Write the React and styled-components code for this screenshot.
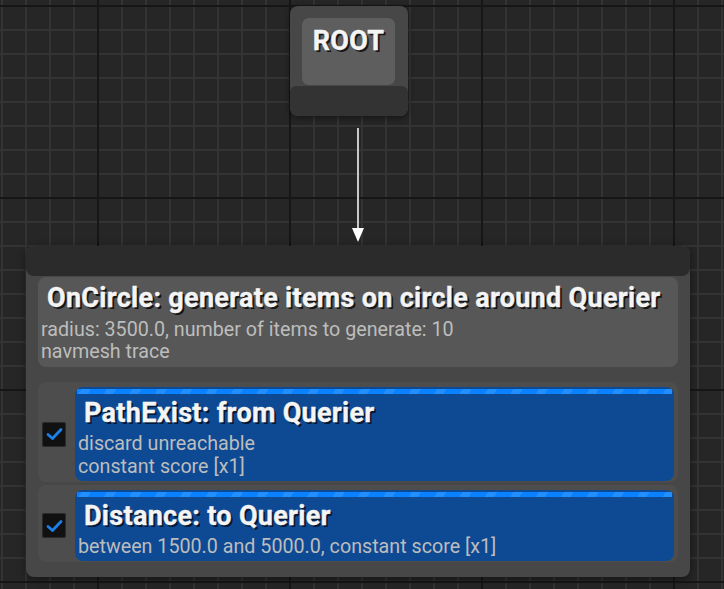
import React from 'react'
import styled, { createGlobalStyle } from 'styled-components'

const GlobalStyle = createGlobalStyle`
  html, body {
    margin: 0;
    padding: 0;
    background: #262626;
    font-family: Roboto, "Liberation Sans", sans-serif;
  }
`

const Canvas = styled.div`
  position: relative;
  width: 724px;
  height: 589px;
  overflow: hidden;
  background-color: #262626;
  background-image:
    linear-gradient(to right, #161616 2px, transparent 2px),
    linear-gradient(to bottom, #161616 2px, transparent 2px),
    linear-gradient(to right, #333333 2px, transparent 2px),
    linear-gradient(to bottom, #333333 2px, transparent 2px);
  background-size: 192px 192px, 192px 192px, 24px 24px, 24px 24px;
  background-position: 97px 0, 0 5px, 1px 0, 0 5px;
`

const RootNode = styled.div`
  position: absolute;
  left: 290px;
  top: 6px;
  width: 118px;
  height: 110px;
  display: flex;
  flex-direction: column;
  background: #474747;
  border-radius: 8px;
  box-shadow: 0 2px 6px rgba(0, 0, 0, 0.45);
  overflow: hidden;
`

const RootBody = styled.div`
  flex: 1;
  padding: 12px 13px 1px 12px;
  display: flex;
`

const RootPlate = styled.div`
  flex: 1;
  background: #5e5e5e;
  border-radius: 7px;
  display: flex;
  justify-content: center;
  padding-top: 8px;
`

const Heading = styled.div`
  font-weight: 700;
  color: #f4f4f4;
  font-size: 27px;
  letter-spacing: 0.3px;
  line-height: 30px;
  white-space: nowrap;
  -webkit-text-stroke: 0.35px #f4f4f4;
  text-shadow: 2px 2px 0 ${p => p.$shadow || 'rgba(0, 0, 0, 0.75)'};
`

const RootFooter = styled.div`
  height: 30px;
  background: #333333;
  border-radius: 6px 6px 8px 8px;
`

const Arrow = styled.svg`
  position: absolute;
  left: 350px;
  top: 126px;
`

const QueryNode = styled.div`
  position: absolute;
  left: 26px;
  top: 246px;
  width: 664px;
  height: 331px;
  background: #474747;
  border-radius: 8px;
  box-shadow: 0 2px 8px rgba(0, 0, 0, 0.45);
  display: flex;
  flex-direction: column;
`

const NodeHeader = styled.div`
  height: 30px;
  background: #2b2b2b;
  border-radius: 8px;
`

const NodeBody = styled.div`
  display: flex;
  flex-direction: column;
  padding: 1px 12px 15px 12px;
  gap: 15px;
`

const GeneratorCard = styled.div`
  height: 90px;
  box-sizing: border-box;
  background: #575757;
  border-radius: 8px;
  padding: 6px 8px 0 3px;
`

const Detail = styled.div`
  color: #bdbdbd;
  font-size: 19.7px;
  line-height: 22.5px;
  white-space: nowrap;
`

const TestList = styled.div`
  display: flex;
  flex-direction: column;
  gap: 3px;
`

const TestRow = styled.div`
  display: flex;
  align-items: center;
  gap: 9px;
  background: #4d4d4d;
  border-radius: 8px;
  padding: 5px 4px 1px 4px;
  height: ${p => p.$height}px;
  box-sizing: border-box;
`

const Checkbox = styled.div`
  width: 24px;
  height: 25px;
  flex: none;
  background: #111111;
  border-radius: 3px;
  box-shadow: inset 0 0 0 1px #2a2a2a;
  display: flex;
  align-items: center;
  justify-content: center;
`

const TestCard = styled.div`
  flex: 1;
  align-self: stretch;
  background: #0e4a94;
  border-radius: 8px;
  overflow: hidden;
  padding: 0 0 0 3px;
  display: flex;
  flex-direction: column;
`

const Stripe = styled.div`
  height: 5.5px;
  margin: 1.5px 2px 0 -1px;
  background-color: #0a82ff;
  background-image: repeating-linear-gradient(
    -60deg,
    rgba(255, 255, 255, 0.1) 0 8px,
    transparent 8px 22px
  );
`

const TestTitle = styled(Heading)`
  padding-left: 6px;
  margin: 3.5px 0 5.5px;
`

const GenTitle = styled(Heading)`
  padding-left: 6px;
  margin-bottom: 5.5px;
`

const Check = () => (
  <svg width="17" height="14" viewBox="0 0 17 14">
    <path d="M2 7.5 L6.5 11.5 L15 2.5" fill="none" stroke="#1b80ea" strokeWidth="2.8" strokeLinecap="round" strokeLinejoin="round" />
  </svg>
)

const tests = [
  {
    title: 'PathExist: from Querier',
    lines: ['discard unreachable', 'constant score [x1]'],
    height: 100,
  },
  {
    title: 'Distance: to Querier',
    lines: ['between 1500.0 and 5000.0, constant score [x1]'],
    height: 77,
  },
]

export default function App() {
  return (
    <>
      <GlobalStyle />
      <Canvas>
        <RootNode>
          <RootBody>
            <RootPlate>
              <Heading>ROOT</Heading>
            </RootPlate>
          </RootBody>
          <RootFooter />
        </RootNode>

        <Arrow width="16" height="118" viewBox="0 0 16 118">
          <line x1="8" y1="2" x2="8" y2="104" stroke="#c8c8c8" strokeWidth="2" />
          <path d="M2 102 L14 102 L8 116 Z" fill="#ffffff" />
        </Arrow>

        <QueryNode>
          <NodeHeader />
          <NodeBody>
            <GeneratorCard>
              <GenTitle>OnCircle: generate items on circle around Querier</GenTitle>
              <Detail>radius: 3500.0, number of items to generate: 10</Detail>
              <Detail>navmesh trace</Detail>
            </GeneratorCard>
            <TestList>
              {tests.map(t => (
                <TestRow key={t.title} $height={t.height}>
                  <Checkbox>
                    <Check />
                  </Checkbox>
                  <TestCard>
                    <Stripe />
                    <TestTitle $shadow="rgba(4, 18, 40, 0.9)">{t.title}</TestTitle>
                    {t.lines.map(l => (
                      <Detail key={l}>{l}</Detail>
                    ))}
                  </TestCard>
                </TestRow>
              ))}
            </TestList>
          </NodeBody>
        </QueryNode>
      </Canvas>
    </>
  )
}
